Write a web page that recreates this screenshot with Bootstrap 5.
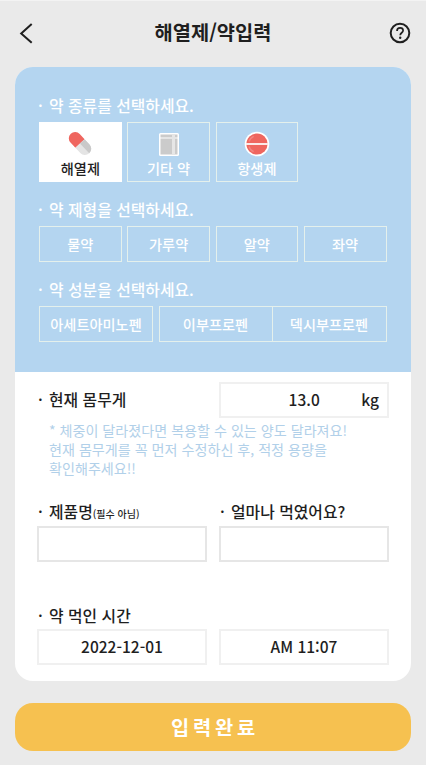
<!DOCTYPE html>
<html lang="ko">
<head>
<meta charset="utf-8">
<meta name="viewport" content="width=device-width, initial-scale=1">
<title>해열제/약입력</title>
<link href="https://cdn.jsdelivr.net/npm/bootstrap@5.3.0/dist/css/bootstrap.min.css" rel="stylesheet">
<style>
body { background: #eaeaea; color: #1f1f1f; font-family: "Noto Sans CJK KR", "Noto Sans", sans-serif; font-size: 16px; line-height: 24px; font-weight: 500; height: 765px; overflow: hidden; border-top: 1px solid #f3f3f3; }
.app-head { height: 65.500px; padding: 0 15px 2px 19px; }
.app-title { font-size: 19.800px; font-weight: 700; line-height: 30px; padding: 0 0 2px 2px; }
.icon-btn { line-height: 0; }
.med-card { margin: 0 15px; height: 614.500px; border-radius: 18px; }
.pick-area { background: #b4d5f0; color: #fff; height: 305px; padding: 26.500px 23px 0 24px; }
.q-label { line-height: 26px; height: 24px; margin: 0; font-size: 15.850px; font-weight: 500; white-space: nowrap; }
.q-label::before { content: "·"; display: inline-block; width: 11px; margin-left: -1px; }
.pick-area .q-label { margin-bottom: 5px; }
.pick-row { gap: 5.500px; }
.pick { width: 82.750px; height: 36px; border: 1px solid #e4f0ec; border-radius: 0; color: #fff; font-size: 14.200px; font-weight: 500; line-height: 20px; white-space: nowrap; }
.pick-tall { height: 60px; }
.pick-wide { width: 114px; }
.pick.active { background: #fff; border-color: #fff; color: #1f1f1f; }
.pick-text { margin: 1px 0 3px; }
.pick-area .q-next { margin-top: 15px; }
.form-area { padding: 10px 22px 0 22px; }
.pair { display: grid; grid-template-columns: 170px 170px; column-gap: 12px; }
.pair .q-label { margin-left: 2px; }
.box { height: 36px; border: 2px solid #e6e6e6; border-radius: 0; padding: 0 8px 2px; color: #1f1f1f; font-size: 15.500px; font-weight: 500; background: #fff; }
.box-soft { border-color: #f0f0f0; }
.box:focus { box-shadow: none; }
.unit-box { display: grid; grid-template-columns: 1fr auto; }
.weight-input { font-weight: 500; outline: 0; padding-left: 18px; color: inherit; }
.hint { color: #b1d0e9; font-size: 14.100px; line-height: 19px; font-weight: 400; margin: 3px 0 0 12px; white-space: nowrap; }
.opt { font-size: 10px; }
.weight-row .q-label { line-height: 24px; }
.names { margin-top: 21px; row-gap: 3px; }
.times { margin-top: 41px; row-gap: 2px; }
.submit { margin: 22px 15px 0; height: 48px; border-radius: 18px; background: #f6c150; color: #fff; font-size: 19.800px; font-weight: 700; }
.submit-text { letter-spacing: 3.800px; padding-left: 4px; }
</style>
<script src="https://cdn.jsdelivr.net/npm/bootstrap@5.3.0/dist/js/bootstrap.bundle.min.js"></script>
</head>
<body class="d-flex flex-column">
<header class="app-head d-flex align-items-center justify-content-between flex-shrink-0">
  <a href="#" class="icon-btn" aria-label="뒤로">
    <svg width="16" height="22" viewBox="0 0 16 22" fill="none" stroke="#1f1f1f" stroke-width="2"><path d="M12.700 2 2.200 11.500 12.700 20.800"/></svg>
  </a>
  <h1 class="app-title m-0">해열제/약입력</h1>
  <a href="#" class="icon-btn" aria-label="도움말">
    <svg width="22" height="22" viewBox="0 0 22 22" fill="none" stroke="#1f1f1f"><circle cx="11" cy="11" r="9.300" stroke-width="2"/><path d="M8 9C8 7 9.300 5.900 11.100 5.900S14.100 7 14.100 8.500C14.100 10.600 11.200 10.900 11.200 13.200" stroke-width="1.700"/><circle cx="11.200" cy="15.800" r="1.200" fill="#1f1f1f" stroke="none"/></svg>
  </a>
</header>

<main class="med-card bg-white overflow-hidden flex-shrink-0">
  <section class="pick-area">
    <h2 class="q-label">약 종류를 선택하세요.</h2>
    <div class="pick-row d-flex">
      <button class="pick pick-tall btn active p-0 d-flex flex-column align-items-center justify-content-end">
        <svg width="26" height="26" viewBox="0 0 26 26"><g transform="translate(13 12.500) rotate(-43)"><path d="M-6.300 0v-7.200a6.300 6.300 0 0 1 12.600 0V0z" fill="#ef665f"/><path d="M-6.300 0v7.200a6.300 6.300 0 0 0 12.600 0V0z" fill="#e4e4e4"/><path d="M0 0v13.500a6.300 6.300 0 0 0 6.300-6.300V0z" fill="#c9c9c9"/></g></svg>
        <span class="pick-text">해열제</span>
      </button>
      <button class="pick pick-tall btn p-0 d-flex flex-column align-items-center justify-content-end">
        <svg width="24" height="26" viewBox="0 0 24 26"><rect x="2" y="2" width="20" height="23" rx="1.500" fill="#fff"/><path d="M3.500 3.500h17v3h-17zM3.500 7.500h17v16h-17z" fill="#cbcbcb"/><path d="M15 3.500h3v20h-3z" fill="#e6e6e6"/></svg>
        <span class="pick-text">기타 약</span>
      </button>
      <button class="pick pick-tall btn p-0 d-flex flex-column align-items-center justify-content-end">
        <svg width="26" height="26" viewBox="0 0 26 26"><circle cx="13" cy="13" r="12.300" fill="#fff"/><circle cx="13" cy="13" r="10.600" fill="#ef665f"/><path d="M5 10.500a8.400 8.400 0 0 1 4.700-5.200M5 15.500a8.400 8.400 0 0 0 4.700 5.200" fill="none" stroke="#f3857f" stroke-width="1.400"/><path d="M2 13h22" stroke="#fbe9e8" stroke-width="2"/></svg>
        <span class="pick-text">항생제</span>
      </button>
    </div>
    <h2 class="q-label q-next">약 제형을 선택하세요.</h2>
    <div class="pick-row d-flex">
      <button class="pick btn p-0">물약</button>
      <button class="pick btn p-0">가루약</button>
      <button class="pick btn p-0">알약</button>
      <button class="pick btn p-0">좌약</button>
    </div>
    <h2 class="q-label q-next">약 성분을 선택하세요.</h2>
    <div class="pick-row d-flex">
      <button class="pick pick-wide btn p-0">아세트아미노펜</button>
      <div class="d-flex">
        <button class="pick pick-wide btn p-0">이부프로펜</button>
        <button class="pick pick-wide btn p-0 border-start-0">덱시부프로펜</button>
      </div>
    </div>
  </section>

  <section class="form-area">
    <div class="pair weight-row align-items-center">
      <label class="q-label" for="weight">현재 몸무게</label>
      <div class="box box-soft unit-box align-items-center">
        <input id="weight" class="weight-input border-0 py-0 pe-0 w-100 text-center" value="13.0">
        <span>kg</span>
      </div>
    </div>
    <p class="hint">* 체중이 달라졌다면 복용할 수 있는 양도 달라져요!<br>현재 몸무게를 꼭 먼저 수정하신 후, 적정 용량을<br>확인해주세요!!</p>
    <div class="pair names">
      <label class="q-label" for="prod">제품명<span class="opt">(필수 아님)</span></label>
      <label class="q-label" for="amount">얼마나 먹였어요?</label>
      <input id="prod" class="box form-control">
      <input id="amount" class="box form-control">
    </div>
    <div class="pair times">
      <h2 class="q-label">약 먹인 시간</h2><span></span>
      <button class="box box-soft">2022-12-01</button>
      <button class="box box-soft">AM 11:07</button>
    </div>
  </section>
</main>
<button class="submit btn border-0 p-0 flex-shrink-0"><span class="submit-text">입력완료</span></button>
</body>
</html>
